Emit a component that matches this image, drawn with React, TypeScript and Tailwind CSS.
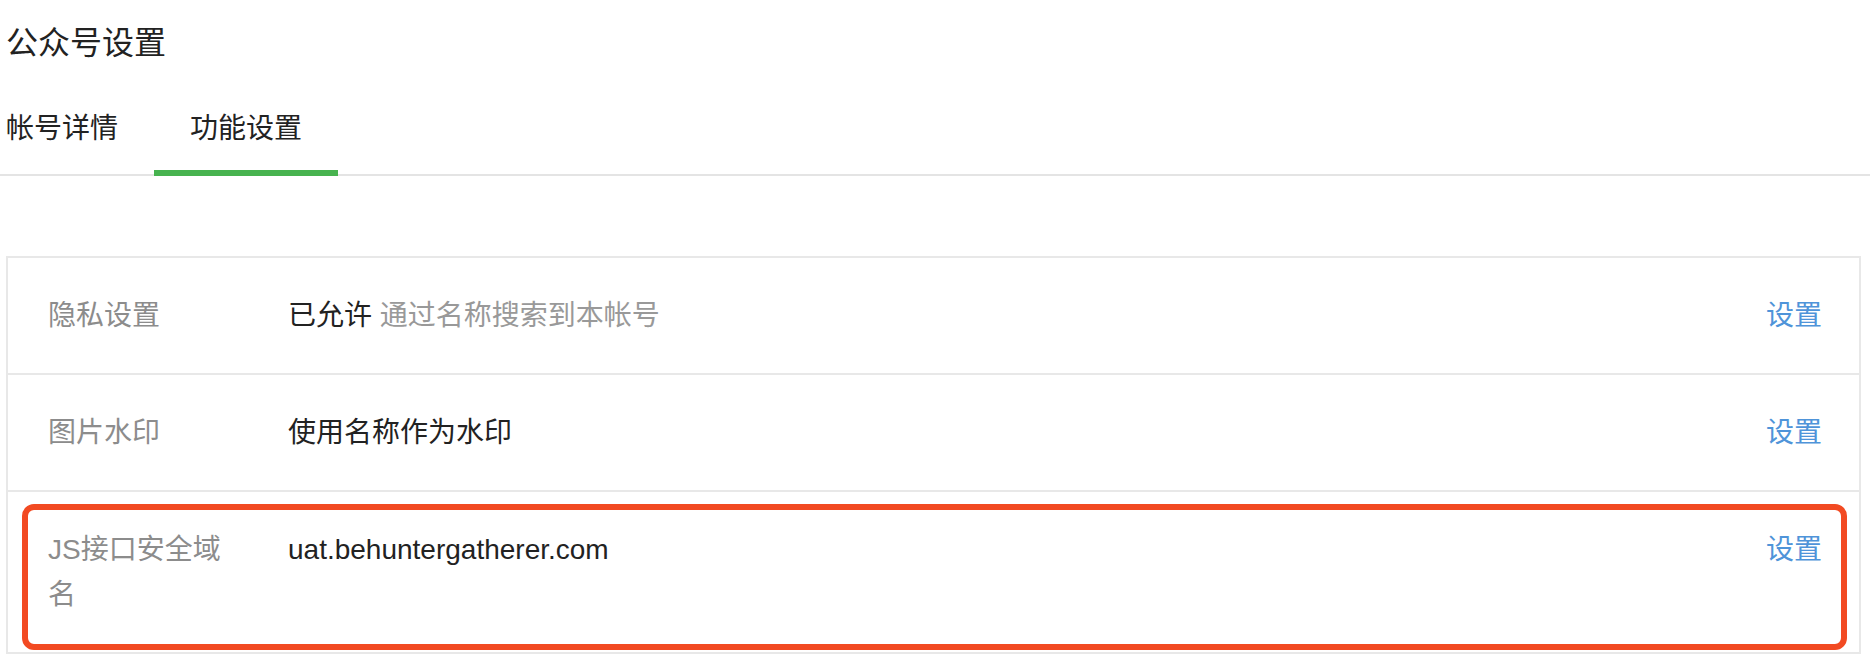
const font = {
  fontFamily: '"Liberation Sans", "Noto Sans CJK SC", sans-serif',
}

type Row = {
  label: string
  value: React.ReactNode
  marked?: boolean
}

const rows: Row[] = [
  {
    label: '隐私设置',
    value: (
      <>
        <span className="text-[#222]">已允许</span>{' '}
        <span className="text-[#999]">通过名称搜索到本帐号</span>
      </>
    ),
  },
  { label: '图片水印', value: <span className="text-[#222]">使用名称作为水印</span> },
  {
    label: 'JS接口安全域名',
    value: <span className="text-[#222]">uat.behuntergatherer.com</span>,
    marked: true,
  },
]

function SettingRow({ row, last }: { row: Row; last: boolean }) {
  return (
    <div
      className={
        'relative flex items-start py-[35px] pl-10 pr-[37px] text-[28px] leading-[45px] ' +
        (last ? '' : 'border-b-2 border-[#e8e8e8]')
      }
    >
      <div className="w-[190px] shrink-0 text-[#8c8c8c]">{row.label}</div>
      <div className="ml-[50px] flex-1">{row.value}</div>
      <a className="shrink-0 cursor-pointer text-[#4f94d9]">设置</a>
      {row.marked && (
        <div className="pointer-events-none absolute bottom-[2px] left-[14px] right-[12px] top-[12px] rounded-[12px] border-[6px] border-[#f24a22]" />
      )}
    </div>
  )
}

export default function App() {
  return (
    <main className="h-[662px] w-full overflow-hidden bg-white" style={font}>
      <h1 className="pl-[6px] pt-[23px] text-[32px] font-normal leading-[40px] text-[#222]">
        公众号设置
      </h1>

      <div className="-mt-[1px] flex border-b-2 border-[#e4e4e4]">
        <div className="pl-[6px] pt-[47px] text-[28px] leading-[40px] text-[#222]">帐号详情</div>
        <div className="ml-[36px] flex w-[184px] flex-col items-center pt-[47px]">
          <span className="text-[28px] leading-[40px] text-[#222]">功能设置</span>
          <div className="-mb-[2px] mt-[21px] h-[6px] w-full bg-[#47b34f]" />
        </div>
      </div>

      <section className="ml-[6px] mr-[9px] mt-[80px] border-2 border-[#e8e8e8]">
        {rows.map((row, i) => (
          <SettingRow key={row.label} row={row} last={i === rows.length - 1} />
        ))}
      </section>
    </main>
  )
}
